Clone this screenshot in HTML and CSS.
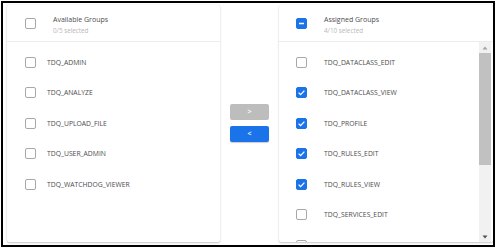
FILE: index.html
```html
<!DOCTYPE html>
<html>
<head>
<meta charset="utf-8">
<link rel="stylesheet" href="styles.css">
</head>
<body>
<div class="frame">
  <div class="card left">
    <div class="head">
      <span class="cb"></span>
      <div class="titles">
        <div class="title">Available Groups</div>
        <div class="sub">0/5 selected</div>
      </div>
    </div>
    <div class="list">
      <div class="row"><span class="cb"></span><span class="lbl">TDQ_ADMIN</span></div>
      <div class="row"><span class="cb"></span><span class="lbl">TDQ_ANALYZE</span></div>
      <div class="row"><span class="cb"></span><span class="lbl">TDQ_UPLOAD_FILE</span></div>
      <div class="row"><span class="cb"></span><span class="lbl">TDQ_USER_ADMIN</span></div>
      <div class="row"><span class="cb"></span><span class="lbl">TDQ_WATCHDOG_VIEWER</span></div>
    </div>
  </div>
  <div class="mid">
    <button class="btn off">&gt;</button>
    <button class="btn on">&lt;</button>
  </div>
  <div class="card right">
    <div class="head">
      <span class="cb ind"><svg viewBox="0 0 11 11" width="11" height="11"><path d="M3 5.5h5" stroke="#fff" stroke-width="1.4"/></svg></span>
      <div class="titles">
        <div class="title">Assigned Groups</div>
        <div class="sub">4/10 selected</div>
      </div>
    </div>
    <div class="body">
      <div class="list">
        <div class="row"><span class="cb"></span><span class="lbl">TDQ_DATACLASS_EDIT</span></div>
        <div class="row"><span class="cb on"><svg viewBox="0 0 11 11" width="11" height="11"><path d="M2.6 5.6l2 2 3.8-4" fill="none" stroke="#fff" stroke-width="1.3"/></svg></span><span class="lbl">TDQ_DATACLASS_VIEW</span></div>
        <div class="row"><span class="cb on"><svg viewBox="0 0 11 11" width="11" height="11"><path d="M2.6 5.6l2 2 3.8-4" fill="none" stroke="#fff" stroke-width="1.3"/></svg></span><span class="lbl">TDQ_PROFILE</span></div>
        <div class="row"><span class="cb on"><svg viewBox="0 0 11 11" width="11" height="11"><path d="M2.6 5.6l2 2 3.8-4" fill="none" stroke="#fff" stroke-width="1.3"/></svg></span><span class="lbl">TDQ_RULES_EDIT</span></div>
        <div class="row"><span class="cb on"><svg viewBox="0 0 11 11" width="11" height="11"><path d="M2.6 5.6l2 2 3.8-4" fill="none" stroke="#fff" stroke-width="1.3"/></svg></span><span class="lbl">TDQ_RULES_VIEW</span></div>
        <div class="row"><span class="cb"></span><span class="lbl">TDQ_SERVICES_EDIT</span></div>
        <div class="row"><span class="cb"></span><span class="lbl">TDQ_SERVICES_VIEW</span></div>
      </div>
      <div class="sbar">
        <div class="arrow"><svg viewBox="0 0 12 10" width="12" height="10"><path d="M3.5 6.5h5l-2.5-3z" fill="#a3a3a3"/></svg></div>
        <div class="track"><div class="thumb"></div></div>
        <div class="arrow"><svg viewBox="0 0 12 10" width="12" height="10"><path d="M3.5 3.5h5l-2.5 3z" fill="#505050"/></svg></div>
      </div>
    </div>
  </div>
</div>
</body>
</html>
```
FILE: styles.css
```css
* { box-sizing: border-box; }
html, body { margin: 0; padding: 0; background: #fff; }
body { font-family: "Open Sans", "Noto Sans", sans-serif; color: #4d4d4d; }
.frame {
  margin: 1px 0 0 1px;
  width: 494px;
  height: 246px;
  border: 2px solid #000;
  display: flex;
  padding: 2px 0 3px 4px;
  overflow: hidden;
}
.card {
  background: #fff;
  box-shadow: 0 1px 2px rgba(0,0,0,0.22), 0 0 1px rgba(0,0,0,0.12);
  border-radius: 2px;
  display: flex;
  flex-direction: column;
  overflow: hidden;
}
.left { width: 213px; }
.right { width: 214px; }
.mid {
  width: 59px;
  display: flex;
  flex-direction: column;
  align-items: center;
  justify-content: center;
  gap: 6px;
  padding-bottom: 1px;
}
.btn {
  width: 39px;
  height: 16px;
  border: none;
  border-radius: 2px;
  color: #fff;
  font: 600 7px "Open Sans", sans-serif;
  padding: 0;
  line-height: 16px;
}
.btn.off { background: #bdbdbd; }
.btn.on { background: #1a73e8; box-shadow: 0 1px 1px rgba(0,0,0,0.2); }
.head {
  height: 37px;
  flex: none;
  border-bottom: 1px solid #ececec;
  display: flex;
  align-items: flex-start;
  padding: 13px 0 0 18px;
}
.right .head { padding-left: 17px; }
.titles { margin-left: 17px; margin-top: -3px; }
.right .titles { margin-left: 17px; }
.title { font-size: 7px; line-height: 10px; color: #4d4d4d; }
.sub { font-size: 6.3px; line-height: 9px; color: #b8b8b8; margin-top: 1px; }
.cb {
  width: 11px;
  height: 11px;
  flex: none;
  border: 1px solid #a8a8a8;
  border-radius: 2px;
  background: #fff;
  display: block;
}
.cb svg { display: block; margin: -1px; }
.cb.on, .cb.ind { background: #1a73e8; border-color: #1a73e8; }
.list { padding-top: 5px; flex: 1; overflow: hidden; }
.row {
  height: 30.5px;
  display: flex;
  align-items: center;
  padding-left: 18px;
}
.right .row { padding-left: 17px; }
.lbl { margin-left: 11px; font-size: 6.8px; color: #4d4d4d; }
.right .lbl { margin-left: 17px; }
.body { flex: 1; display: flex; min-height: 0; }
.sbar {
  width: 12px;
  flex: none;
  background: #f1f1f1;
  display: flex;
  flex-direction: column;
  margin-right: 2px;
}
.arrow { height: 11px; flex: none; display: flex; align-items: center; justify-content: center; }
.arrow svg { display: block; }
.track { flex: 1; }
.thumb { height: 112px; background: #c1c1c1; }
```
